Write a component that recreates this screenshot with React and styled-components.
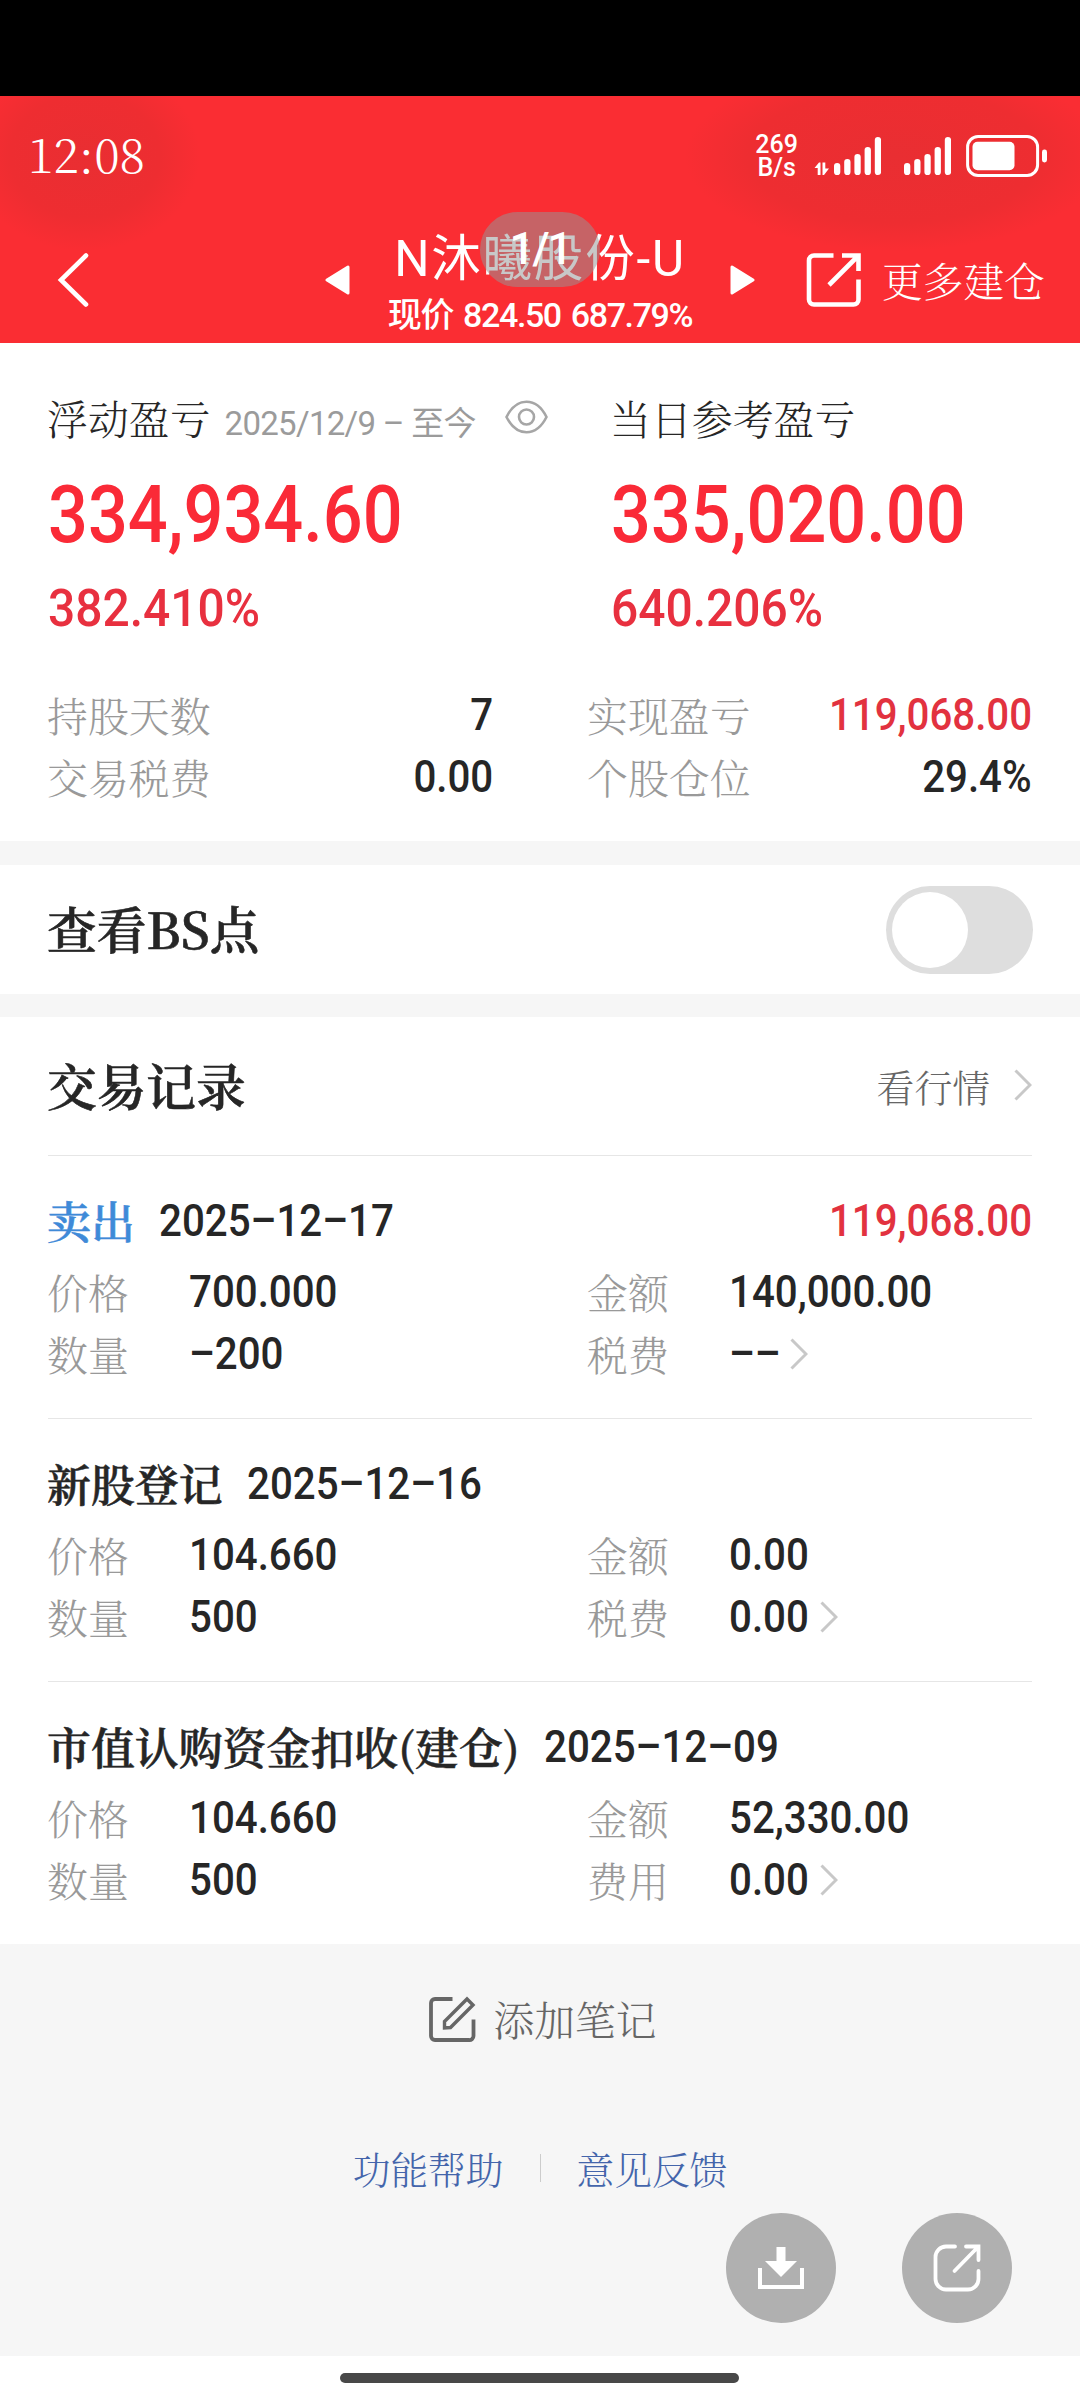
import React, { useState } from 'react';
import styled, { createGlobalStyle } from 'styled-components';

const GlobalStyle = createGlobalStyle`
  * { box-sizing: border-box; }
  body {
    margin: 0;
    background: #fff;
    color: #262626;
    font-family: "Noto Serif CJK SC", "Noto Sans CJK SC", serif;
  }
`;

const serif = '"Noto Serif CJK SC", "Noto Sans CJK SC", serif';
const digits = 'Roboto, "Noto Sans CJK SC", sans-serif';

//Styled Components
const Page = styled.div`
  position: relative;
  display: flex;
  flex-direction: column;
  width: 1080px;
  height: 2400px;
  overflow: hidden;
`;

const Notch = styled.div`
  height: 96px;
  background: #000;
`;

const Header = styled.header`
  height: 247px;
  color: #fff;
  background:
    radial-gradient(115px 95px at 85px 60px, #e92e32 0%, #ee2d31 65%, transparent 100%),
    radial-gradient(210px 95px at 895px 60px, #e92e32 0%, #ee2d31 70%, transparent 100%),
    #fa2d33;
`;

const StatusBar = styled.div`
  display: flex;
  align-items: center;
  justify-content: space-between;
  height: 120px;
  padding: 0 32px 0 28px;
`;

const Clock = styled.div`
  margin-top: -7px;
  font: 300 47px/60px ${serif};
`;

const StatusIcons = styled.div`
  display: flex;
  align-items: center;
`;

const NetSpeed = styled.div`
  margin-right: 16px;
  font: 500 25px/23px ${digits};
  text-align: center;
`;

const NavBar = styled.div`
  display: grid;
  grid-template-columns: 325px 430px 1fr;
  align-items: center;
  height: 127px;
`;

const BackButton = styled.div`
  display: flex;
  padding-left: 56px;
`;

const Switcher = styled.div`
  display: flex;
  align-items: center;
  justify-content: space-between;
`;

const TitleBlock = styled.div`
  position: relative;
  display: flex;
  flex-direction: column;
  align-items: center;
  padding-top: 12px;
  white-space: nowrap;
`;

const StockName = styled.div`
  font: 400 49.5px/58px ${digits};
  letter-spacing: 1.8px;
`;

const Quote = styled.div`
  font: 500 34px/54px ${digits};
  letter-spacing: -1.4px;
  word-spacing: 3px;
`;

const PageBadge = styled.div`
  position: absolute;
  top: -6px;
  left: 50%;
  width: 120px;
  height: 75px;
  margin-left: -60px;
  border-radius: 38px;
  background: rgba(150, 150, 150, 0.52);
  font: 500 44px/75px ${digits};
  letter-spacing: -2px;
  text-align: center;
`;

const MoreButton = styled.div`
  display: flex;
  align-items: center;
  gap: 20px;
  padding-left: 51px;
  font-size: 40.7px;
  font-weight: 300;
  white-space: nowrap;
`;

const Summary = styled.section`
  height: 498px;
  padding: 44px 48px 0;
`;

const TotalsGrid = styled.div`
  display: grid;
  grid-template-columns: 563px 1fr;
`;

const TotalTitle = styled.div`
  display: flex;
  align-items: center;
  height: 60px;
  margin-left: -1px;
  font-size: 40.9px;
  font-weight: 300;
`;

const Period = styled.span`
  margin: 13px 29px 0 14px;
  color: #9b9b9b;
  font: 400 33px/40px ${digits};
  letter-spacing: -0.7px;
`;

// the figures are set narrower than Roboto's default width
const Figure = styled.span`
  display: block;
  font-family: ${digits};
  font-weight: 500;
  transform: scaleX(0.915);
  transform-origin: ${({ $right }) => ($right ? 'right' : 'left')} center;
`;

const Amount = styled(Figure)`
  color: #fa2a37;
  font-size: 80px;
  line-height: 94px;
  transform: scaleX(0.878);
  margin-top: 21px;
`;

const Percent = styled(Figure)`
  color: #e8303f;
  font-size: 52px;
  line-height: 60px;
  transform: scaleX(0.922);
  margin-top: 17px;
`;

const Num = styled(Figure)`
  color: ${({ $red }) => ($red ? '#e2323f' : '#262626')};
  font-size: 44px;
  line-height: 60px;
`;

const FactsGrid = styled.div`
  display: grid;
  grid-template-columns: 445px 444px;
  column-gap: 95px;
  margin-top: 45px;
`;

const Fact = styled.div`
  display: flex;
  align-items: center;
  justify-content: space-between;
  height: 62px;
`;

const Label = styled.span`
  margin-left: -1px;
  color: #999;
  font-size: 40.9px;
  font-weight: 300;
  line-height: 60px;
`;

const Gap = styled.div`
  height: ${({ $h }) => $h}px;
  background: #f6f6f6;
`;

const SwitchRow = styled.section`
  display: flex;
  align-items: center;
  justify-content: space-between;
  height: 129px;
  padding: 0 47px 0 48px;
`;

const SectionTitle = styled.h2`
  margin: -3px 0 0 -1px;
  font: 600 49.7px/64px ${serif};
  -webkit-text-stroke: 0.6px currentColor;
`;

const Toggle = styled.button`
  display: flex;
  justify-content: ${({ $on }) => ($on ? 'flex-end' : 'flex-start')};
  width: 147px;
  height: 88px;
  padding: 6px;
  border: 0;
  border-radius: 44px;
  background: ${({ $on }) => ($on ? '#fa2d33' : '#dedede')};
  &::before {
    content: '';
    width: 76px;
    height: 76px;
    border-radius: 50%;
    background: #fff;
  }
`;

const Records = styled.section`
  padding: 0 48px;
`;

const RecordsHead = styled.div`
  display: flex;
  align-items: center;
  justify-content: space-between;
  height: 138px;
`;

const QuoteLink = styled.div`
  display: flex;
  align-items: center;
  gap: 24px;
  margin-top: -2px;
  color: #666;
  font-size: 37.8px;
  font-weight: 300;
`;

const Record = styled.article`
  height: 263px;
  padding-top: 35px;
  border-top: 1px solid #e6e6e6;
`;

const RecordHead = styled.div`
  display: flex;
  align-items: center;
  height: 60px;
  margin-bottom: 10px;
`;

const RecordKind = styled.h3`
  margin: -3px 24px 0 -1px;
  color: ${({ $sell }) => ($sell ? '#3f8ad8' : '#262626')};
  font: 600 43.9px/60px ${serif};
  -webkit-text-stroke: 0.5px currentColor;
`;

const RecordGain = styled(Num)`
  margin-left: auto;
`;

const RecordGrid = styled.div`
  display: grid;
  grid-template-columns: 141px 399px 141px 1fr;
  grid-auto-rows: 62px;
  align-items: center;
`;

const FeeCell = styled.div`
  display: flex;
  align-items: center;
  gap: 4px;
`;

const Footer = styled.footer`
  display: flex;
  flex-direction: column;
  align-items: center;
  height: 412px;
  padding-top: 44px;
  background: #f6f6f6;
`;

const AddNote = styled.div`
  display: flex;
  align-items: center;
  gap: 18px;
  height: 60px;
  padding-left: 5px;
  color: #666;
  font-size: 40.7px;
  font-weight: 300;
`;

const Links = styled.nav`
  display: flex;
  align-items: center;
  gap: 36px;
  height: 50px;
  margin-top: 95px;
  color: #4465ab;
  font-size: 37.7px;
  font-weight: 300;
`;

const LinkDivider = styled.i`
  width: 1px;
  height: 28px;
  background: #ccc;
`;

const FloatingActions = styled.div`
  position: absolute;
  top: 2213px;
  right: 68px;
  display: flex;
  gap: 66px;
`;

const RoundButton = styled.div`
  display: flex;
  align-items: center;
  justify-content: center;
  width: 110px;
  height: 110px;
  border-radius: 50%;
  background: #b0b0b0;
`;

const HomeArea = styled.div`
  display: flex;
  justify-content: center;
  height: 44px;
  padding: 17px 1px 0 0;
`;

const HomeBar = styled.div`
  width: 399px;
  height: 10px;
  border-radius: 5px;
  background: #484848;
`;

const Chevron = () => (
  <svg width="18" height="32" viewBox="0 0 18 32" fill="none" stroke="#c8c8c8" strokeWidth="3">
    <path d="M1.5 1.5 16 16 1.5 30.5" />
  </svg>
);

const bars = [12, 16, 21, 28, 38];

const SignalIcon = styled.svg`
  margin-right: ${({ $gap }) => $gap}px;
`;

const Signal = ({ data }) => (
  <SignalIcon $gap={data ? 23 : 15} width={data ? 67 : 47} height="42" viewBox={data ? '-20 0 67 42' : '0 0 47 42'} fill="#fff">
    {data && <path d="M-19.5 33 -15 27.5H-13.5V40H-16.3V33ZM-11.5 27.5H-8.7V33.5H-5L-10 40H-11.5Z" />}
    {bars.map((h, i) => (
      <rect key={h} x={i * 10.2} y={40 - h} width="6.3" height={h} rx="3.1" />
    ))}
  </SignalIcon>
);

const Battery = () => (
  <svg width="82" height="42" viewBox="0 0 82 42" fill="#fff">
    <rect x="1.6" y="1.6" width="70" height="38.8" rx="10.5" fill="none" stroke="#fff" strokeWidth="3" />
    <rect x="6.5" y="6.8" width="42" height="28.5" rx="5" />
    <rect x="76" y="14.5" width="5" height="13" rx="2.4" />
  </svg>
);

const Triangle = ({ flip }) => (
  <svg width="25" height="30" viewBox="0 0 25 30" fill="#fff" stroke="#fff" strokeWidth="3" strokeLinejoin="round">
    <path d={flip ? 'M2 2V28L23 15Z' : 'M23 2V28L2 15Z'} />
  </svg>
);

const OpenIcon = () => (
  <svg width="56" height="56" viewBox="0 0 56 56" fill="none" stroke="#fff" strokeWidth="4.6">
    <path d="M27.5 3.5H8A5 5 0 0 0 3 8.5V47.5A5 5 0 0 0 8 52.5H47.5A5 5 0 0 0 52.5 47.5V27.5" />
    <path d="M36 3.5H52.5V19M51.5 4.5 23 33" />
  </svg>
);

const EyeIcon = () => (
  <svg width="43" height="34" viewBox="0 0 43 34" fill="none" stroke="#a6a6a6" strokeWidth="2.6">
    <path d="M1.5 17C6 8 13 1.8 21.5 1.8S37 8 41.5 17C37 26 30 32.2 21.5 32.2S6 26 1.5 17Z" />
    <circle cx="21.5" cy="17" r="7.5" />
  </svg>
);

const NoteIcon = () => (
  <svg width="47" height="47" viewBox="0 0 47 47" fill="none" stroke="#666" strokeWidth="3.8">
    <path d="M23.5 4H6A4 4 0 0 0 2 8V41A4 4 0 0 0 6 45H40A4 4 0 0 0 44.5 41V24.5" />
    <path d="M15.5 33V26.5L38 4 44 10 21.5 32.5Z" strokeWidth="3.4" />
  </svg>
);

const DownloadIcon = () => (
  <svg width="46" height="42" viewBox="0 0 46 42" fill="#fff">
    <path d="M18.5 0H27.5V14H39L23 30 7 14H18.5Z" />
    <path d="M2 21V40H44V21" fill="none" stroke="#fff" strokeWidth="4" />
  </svg>
);

const ShareIcon = () => (
  <svg width="48" height="48" viewBox="0 0 48 48" fill="none" stroke="#fff" strokeWidth="3.8" strokeLinecap="round">
    <path d="M22 2.5H13A10.5 10.5 0 0 0 2.5 13V35A10.5 10.5 0 0 0 13 45.5H35A10.5 10.5 0 0 0 45.5 35V27" />
    <path d="M33 2.5H45.5V16M44.5 3.5 21.5 27" />
  </svg>
);

const facts = [
  { label: '持股天数', value: '7' },
  { label: '实现盈亏', value: '119,068.00', red: true },
  { label: '交易税费', value: '0.00' },
  { label: '个股仓位', value: '29.4%' },
];

const records = [
  { kind: '卖出', sell: true, date: '2025–12–17', gain: '119,068.00', price: '700.000', amount: '140,000.00', count: '–200', feeLabel: '税费', fee: '––' },
  { kind: '新股登记', date: '2025–12–16', price: '104.660', amount: '0.00', count: '500', feeLabel: '税费', fee: '0.00' },
  { kind: '市值认购资金扣收(建仓)', date: '2025–12–09', price: '104.660', amount: '52,330.00', count: '500', feeLabel: '费用', fee: '0.00' },
];

export default function App() {
  const [showPoints, setShowPoints] = useState(false);

  return (
    <Page>
      <GlobalStyle />
      <Notch />
      <Header>
        <StatusBar>
          <Clock>12:08</Clock>
          <StatusIcons>
            <NetSpeed>269<br />B/s</NetSpeed>
            <Signal data />
            <Signal />
            <Battery />
          </StatusIcons>
        </StatusBar>
        <NavBar>
          <BackButton>
            <svg width="36" height="56" viewBox="0 0 36 56" fill="none" stroke="#fff" strokeWidth="4.6" strokeLinecap="round">
              <path d="M30 3.5 5 28 30 52.5" />
            </svg>
          </BackButton>
          <Switcher>
            <Triangle />
            <TitleBlock>
              <StockName>N沐曦股份-U</StockName>
              <Quote>现价 824.50 687.79%</Quote>
              <PageBadge>1/1</PageBadge>
            </TitleBlock>
            <Triangle flip />
          </Switcher>
          <MoreButton>
            <OpenIcon />
            更多建仓
          </MoreButton>
        </NavBar>
      </Header>

      <Summary>
        <TotalsGrid>
          <div>
            <TotalTitle>
              浮动盈亏
              <Period>2025/12/9 – 至今</Period>
              <EyeIcon />
            </TotalTitle>
            <Amount>334,934.60</Amount>
            <Percent>382.410%</Percent>
          </div>
          <div>
            <TotalTitle>当日参考盈亏</TotalTitle>
            <Amount>335,020.00</Amount>
            <Percent>640.206%</Percent>
          </div>
        </TotalsGrid>
        <FactsGrid>
          {facts.map((fact) => (
            <Fact key={fact.label}>
              <Label>{fact.label}</Label>
              <Num $right $red={fact.red}>{fact.value}</Num>
            </Fact>
          ))}
        </FactsGrid>
      </Summary>

      <Gap $h={24} />
      <SwitchRow>
        <SectionTitle>查看BS点</SectionTitle>
        <Toggle $on={showPoints} onClick={() => setShowPoints(!showPoints)} />
      </SwitchRow>
      <Gap $h={23} />

      <Records>
        <RecordsHead>
          <SectionTitle>交易记录</SectionTitle>
          <QuoteLink>
            看行情
            <Chevron />
          </QuoteLink>
        </RecordsHead>
        {records.map((record) => (
          <Record key={record.date}>
            <RecordHead>
              <RecordKind $sell={record.sell}>{record.kind}</RecordKind>
              <Num>{record.date}</Num>
              {record.gain && <RecordGain $right $red>{record.gain}</RecordGain>}
            </RecordHead>
            <RecordGrid>
              <Label>价格</Label>
              <Num>{record.price}</Num>
              <Label>金额</Label>
              <Num>{record.amount}</Num>
              <Label>数量</Label>
              <Num>{record.count}</Num>
              <Label>{record.feeLabel}</Label>
              <FeeCell>
                <Num>{record.fee}</Num>
                <Chevron />
              </FeeCell>
            </RecordGrid>
          </Record>
        ))}
      </Records>

      <Footer>
        <AddNote>
          <NoteIcon />
          添加笔记
        </AddNote>
        <Links>
          <span>功能帮助</span>
          <LinkDivider />
          <span>意见反馈</span>
        </Links>
      </Footer>
      <HomeArea>
        <HomeBar />
      </HomeArea>

      <FloatingActions>
        <RoundButton><DownloadIcon /></RoundButton>
        <RoundButton><ShareIcon /></RoundButton>
      </FloatingActions>
    </Page>
  );
}
